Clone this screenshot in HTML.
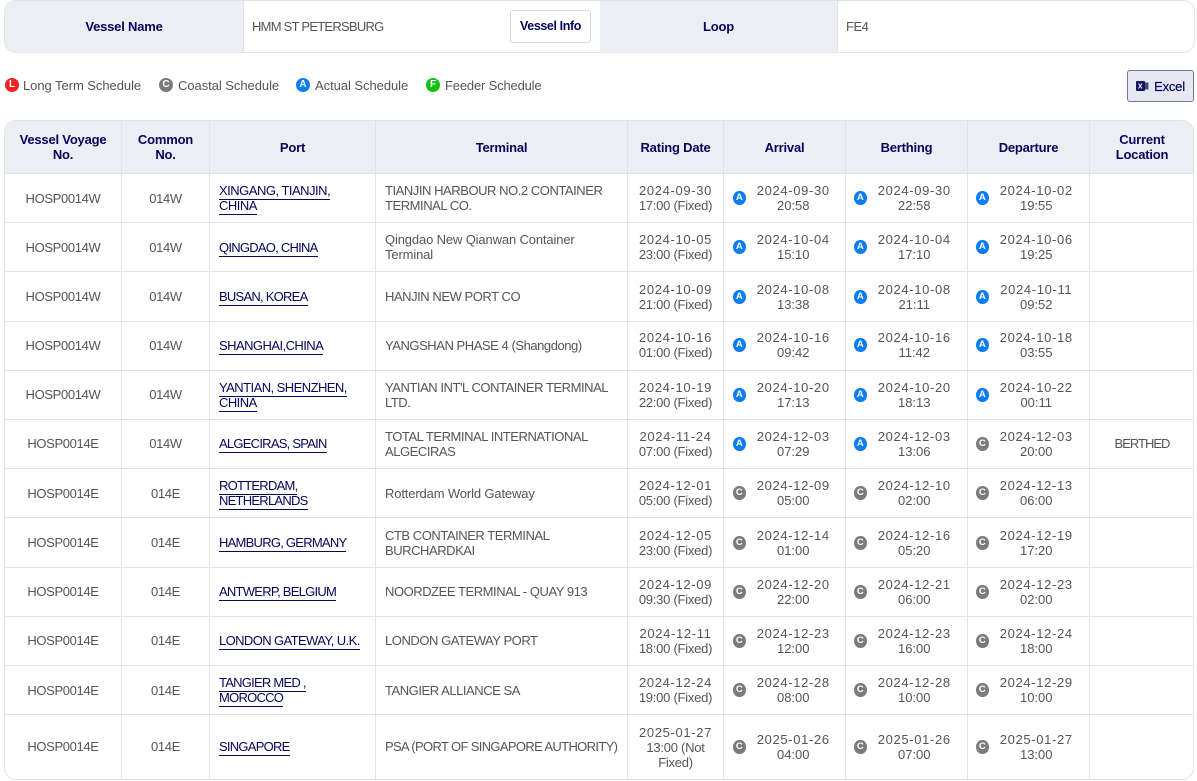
<!DOCTYPE html>
<html lang="en"><head><meta charset="utf-8"><title>Vessel Schedule</title>
<style>
*{box-sizing:border-box}
html,body{margin:0;padding:0;background:#fff;width:1197px;height:781px;overflow:hidden}
body{font-family:"Liberation Sans",sans-serif;font-size:13px;line-height:15px;color:#555;position:relative}
.top{position:absolute;left:4px;top:0;width:1191px;height:53px;border:1px solid #e0e3e9;border-radius:12px;overflow:hidden;display:flex;align-items:center}
.top div{height:100%;display:flex;align-items:center}
.th{background:#eceef3;color:#05055c;font-weight:bold;justify-content:center;letter-spacing:-.2px}
.vi{position:absolute;left:505px;top:9px;width:81px;height:33px;border:1px solid #d5d8e0;border-radius:3px;background:#fff;color:#05055c;font-weight:bold;display:flex;align-items:center;justify-content:center;font-size:12.5px;letter-spacing:-.4px;padding-bottom:1px}
.leg{position:absolute;top:77px;height:16px;display:flex;align-items:center;color:#555;letter-spacing:-.05px}
.i{display:inline-block;width:14px;height:14px;border-radius:50%;color:#fff;font-weight:bold;font-style:normal;font-size:10px;line-height:14px;text-align:center;letter-spacing:0;flex:none}
.L{background:#ee2222}.C{background:#7b7b7b}.A{background:#0a7df5}.F{background:#12c012}
.leg .i{margin-right:5px}
.xl{position:absolute;left:1127px;top:70px;width:67px;height:32px;background:#e6e7f1;border:1px solid #7478a4;border-radius:3px;color:#05055c;display:flex;align-items:center;justify-content:center;letter-spacing:-.2px;-webkit-text-stroke:.2px #05055c}
.xl svg{margin-right:5px}
.wrap{position:absolute;left:4px;top:120px;width:1190px;height:660px;border:1px solid #e0e3e9;border-radius:12px;overflow:hidden}
table{border-collapse:collapse;table-layout:fixed;width:1190px;margin:-1px 0 0 -1px}
th,td{border:1px solid #e0e3e9;text-align:center;vertical-align:middle;padding:0 9px;font-weight:normal}
th{background:#eceef3;color:#05055c;font-weight:bold;height:53px;padding:0 6px;letter-spacing:-.2px}
td{letter-spacing:-.35px}
tr.u td{padding-bottom:1px}
tr.v td{padding-bottom:2px}
tr.v td.p,tr.v td.t,tr.v td:nth-child(1),tr.v td:nth-child(2){padding-bottom:1px}
td:nth-child(7),td:nth-child(8){padding-left:8px;padding-right:10px}
td.p,td.t{text-align:left}
td.t{letter-spacing:-.45px}
td.m{letter-spacing:-.14px}
td.p{letter-spacing:-.75px}
td.p span{color:#05055c;border-bottom:1px solid #05055c;padding-bottom:1px}
td.r{letter-spacing:-.25px}
td.r::first-line{letter-spacing:.65px}
.d{display:flex;align-items:center}
.d .i{width:12.5px;height:14px;font-size:9.5px;line-height:14px;margin-right:5px}
.d b{flex:1;font-weight:normal;text-align:center;white-space:nowrap;letter-spacing:0}
.d b::first-line{letter-spacing:.65px}
td.bt{letter-spacing:-1px}
</style></head><body>
<div class="top">
<div class="th" style="width:238px">Vessel Name</div>
<div style="width:357px;padding-left:8px;border-left:1px solid #e0e3e9;letter-spacing:-.75px">HMM ST PETERSBURG</div>
<div class="th" style="width:237px">Loop</div>
<div style="flex:1;padding-left:8px;border-left:1px solid #e0e3e9;letter-spacing:-.5px">FE4</div>
<span class="vi">Vessel Info</span>
</div>
<div class="leg" style="left:5px"><span class="i L" style="margin-right:4px">L</span>Long Term Schedule</div>
<div class="leg" style="left:159px"><span class="i C">C</span>Coastal Schedule</div>
<div class="leg" style="left:296px"><span class="i A">A</span>Actual Schedule</div>
<div class="leg" style="left:426px;letter-spacing:-.17px"><span class="i F">F</span>Feeder Schedule</div>
<div class="xl"><svg width="13" height="12" viewBox="0 0 13 12"><rect x="0" y="1" width="9" height="10" rx="1" fill="#14145f"/><rect x="8.5" y="2.5" width="4" height="7" fill="#14145f" opacity=".75"/><path d="M2.5 3.5l3.5 5M6 3.5l-3.5 5" stroke="#fff" stroke-width="1" fill="none"/></svg>Excel</div>
<div class="wrap"><table>
<colgroup><col style="width:117px"><col style="width:88px"><col style="width:166px"><col style="width:252px"><col style="width:96px"><col style="width:122px"><col style="width:122px"><col style="width:122px"><col style="width:105px"></colgroup>
<tr><th>Vessel Voyage No.</th><th>Common No.</th><th>Port</th><th>Terminal</th><th>Rating Date</th><th>Arrival</th><th>Berthing</th><th>Departure</th><th>Current Location</th></tr>
<tr style="height:49px"><td>HOSP0014W</td><td>014W</td><td class="p" style="letter-spacing:-.5px"><span>XINGANG, TIANJIN,<br>CHINA</span></td><td class="t">TIANJIN HARBOUR NO.2 CONTAINER TERMINAL CO.</td><td class="r">2024-09-30<br>17:00 (Fixed)</td><td><div class="d"><i class="i A">A</i><b>2024-09-30<br>20:58</b></div></td><td><div class="d"><i class="i A">A</i><b>2024-09-30<br>22:58</b></div></td><td><div class="d"><i class="i A">A</i><b>2024-10-02<br>19:55</b></div></td><td></td></tr>
<tr style="height:49px"><td>HOSP0014W</td><td>014W</td><td class="p"><span>QINGDAO, CHINA</span></td><td class="t m">Qingdao New Qianwan Container Terminal</td><td class="r">2024-10-05<br>23:00 (Fixed)</td><td><div class="d"><i class="i A">A</i><b>2024-10-04<br>15:10</b></div></td><td><div class="d"><i class="i A">A</i><b>2024-10-04<br>17:10</b></div></td><td><div class="d"><i class="i A">A</i><b>2024-10-06<br>19:25</b></div></td><td></td></tr>
<tr style="height:50px"><td>HOSP0014W</td><td>014W</td><td class="p"><span>BUSAN, KOREA</span></td><td class="t">HANJIN NEW PORT CO</td><td class="r">2024-10-09<br>21:00 (Fixed)</td><td><div class="d"><i class="i A">A</i><b>2024-10-08<br>13:38</b></div></td><td><div class="d"><i class="i A">A</i><b>2024-10-08<br>21:11</b></div></td><td><div class="d"><i class="i A">A</i><b>2024-10-11<br>09:52</b></div></td><td></td></tr>
<tr class="v" style="height:49px"><td>HOSP0014W</td><td>014W</td><td class="p" style="letter-spacing:-.55px"><span>SHANGHAI,CHINA</span></td><td class="t">YANGSHAN PHASE 4 (Shangdong)</td><td class="r">2024-10-16<br>01:00 (Fixed)</td><td><div class="d"><i class="i A">A</i><b>2024-10-16<br>09:42</b></div></td><td><div class="d"><i class="i A">A</i><b>2024-10-16<br>11:42</b></div></td><td><div class="d"><i class="i A">A</i><b>2024-10-18<br>03:55</b></div></td><td></td></tr>
<tr class="u" style="height:49px"><td>HOSP0014W</td><td>014W</td><td class="p" style="letter-spacing:-.55px"><span>YANTIAN, SHENZHEN,<br>CHINA</span></td><td class="t">YANTIAN INT'L CONTAINER TERMINAL LTD.</td><td class="r">2024-10-19<br>22:00 (Fixed)</td><td><div class="d"><i class="i A">A</i><b>2024-10-20<br>17:13</b></div></td><td><div class="d"><i class="i A">A</i><b>2024-10-20<br>18:13</b></div></td><td><div class="d"><i class="i A">A</i><b>2024-10-22<br>00:11</b></div></td><td></td></tr>
<tr class="u" style="height:49px"><td>HOSP0014E</td><td>014W</td><td class="p"><span>ALGECIRAS, SPAIN</span></td><td class="t">TOTAL TERMINAL INTERNATIONAL ALGECIRAS</td><td class="r">2024-11-24<br>07:00 (Fixed)</td><td><div class="d"><i class="i A">A</i><b>2024-12-03<br>07:29</b></div></td><td><div class="d"><i class="i A">A</i><b>2024-12-03<br>13:06</b></div></td><td><div class="d"><i class="i C">C</i><b>2024-12-03<br>20:00</b></div></td><td class="bt">BERTHED</td></tr>
<tr style="height:49px"><td>HOSP0014E</td><td>014E</td><td class="p"><span>ROTTERDAM, NETHERLANDS</span></td><td class="t m">Rotterdam World Gateway</td><td class="r">2024-12-01<br>05:00 (Fixed)</td><td><div class="d"><i class="i C">C</i><b>2024-12-09<br>05:00</b></div></td><td><div class="d"><i class="i C">C</i><b>2024-12-10<br>02:00</b></div></td><td><div class="d"><i class="i C">C</i><b>2024-12-13<br>06:00</b></div></td><td></td></tr>
<tr style="height:50px"><td>HOSP0014E</td><td>014E</td><td class="p"><span>HAMBURG, GERMANY</span></td><td class="t">CTB CONTAINER TERMINAL BURCHARDKAI</td><td class="r">2024-12-05<br>23:00 (Fixed)</td><td><div class="d"><i class="i C">C</i><b>2024-12-14<br>01:00</b></div></td><td><div class="d"><i class="i C">C</i><b>2024-12-16<br>05:20</b></div></td><td><div class="d"><i class="i C">C</i><b>2024-12-19<br>17:20</b></div></td><td></td></tr>
<tr class="u" style="height:49px"><td>HOSP0014E</td><td>014E</td><td class="p"><span>ANTWERP, BELGIUM</span></td><td class="t">NOORDZEE TERMINAL - QUAY 913</td><td class="r">2024-12-09<br>09:30 (Fixed)</td><td><div class="d"><i class="i C">C</i><b>2024-12-20<br>22:00</b></div></td><td><div class="d"><i class="i C">C</i><b>2024-12-21<br>06:00</b></div></td><td><div class="d"><i class="i C">C</i><b>2024-12-23<br>02:00</b></div></td><td></td></tr>
<tr class="u" style="height:49px"><td>HOSP0014E</td><td>014E</td><td class="p" style="letter-spacing:-.6px"><span>LONDON GATEWAY, U.K.</span></td><td class="t">LONDON GATEWAY PORT</td><td class="r">2024-12-11<br>18:00 (Fixed)</td><td><div class="d"><i class="i C">C</i><b>2024-12-23<br>12:00</b></div></td><td><div class="d"><i class="i C">C</i><b>2024-12-23<br>16:00</b></div></td><td><div class="d"><i class="i C">C</i><b>2024-12-24<br>18:00</b></div></td><td></td></tr>
<tr style="height:49px"><td>HOSP0014E</td><td>014E</td><td class="p"><span>TANGIER MED ,<br>MOROCCO</span></td><td class="t">TANGIER ALLIANCE SA</td><td class="r">2024-12-24<br>19:00 (Fixed)</td><td><div class="d"><i class="i C">C</i><b>2024-12-28<br>08:00</b></div></td><td><div class="d"><i class="i C">C</i><b>2024-12-28<br>10:00</b></div></td><td><div class="d"><i class="i C">C</i><b>2024-12-29<br>10:00</b></div></td><td></td></tr>
<tr class="u" style="height:65px"><td>HOSP0014E</td><td>014E</td><td class="p"><span>SINGAPORE</span></td><td class="t" style="letter-spacing:-.65px;white-space:nowrap">PSA (PORT OF SINGAPORE AUTHORITY)</td><td class="r" style="padding-bottom:0">2025-01-27<br>13:00 (Not<br>Fixed)</td><td><div class="d"><i class="i C">C</i><b>2025-01-26<br>04:00</b></div></td><td><div class="d"><i class="i C">C</i><b>2025-01-26<br>07:00</b></div></td><td><div class="d"><i class="i C">C</i><b>2025-01-27<br>13:00</b></div></td><td></td></tr>
</table></div>
</body></html>
